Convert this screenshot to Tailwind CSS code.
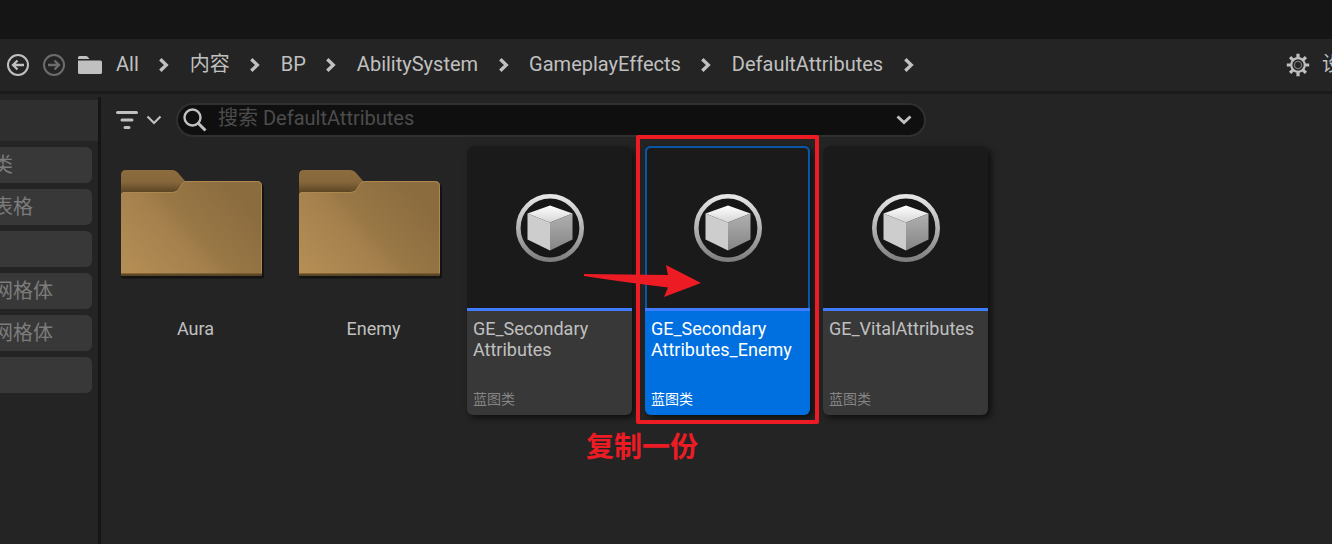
<!DOCTYPE html>
<html lang="zh-CN">
<head>
<meta charset="utf-8">
<meta name="viewport" content="width=device-width, initial-scale=1">
<title>Content Browser</title>
<script src="https://cdn.jsdelivr.net/npm/@tailwindcss/browser@4"></script>
</head>
<body class="flex min-h-screen flex-col overflow-hidden bg-[#242424] font-['Roboto','Noto_Sans_CJK_SC',sans-serif] text-xl text-[#c0c0c0]">

<svg class="absolute size-0" aria-hidden="true">
  <defs>
    <linearGradient id="face" gradientUnits="userSpaceOnUse" x1="10" y1="106" x2="110" y2="16">
      <stop offset="0" stop-color="#b48e54"/><stop offset="0.45" stop-color="#a5804d"/><stop offset="0.58" stop-color="#997846"/><stop offset="1" stop-color="#8b6c3f"/>
    </linearGradient>
    <linearGradient id="tab" gradientUnits="userSpaceOnUse" x1="0" y1="0" x2="0" y2="22">
      <stop offset="0" stop-color="#8d6d3e"/><stop offset="0.55" stop-color="#86673b"/><stop offset="1" stop-color="#5c4524"/>
    </linearGradient>
    <linearGradient id="ring" x1="0" y1="0" x2="0" y2="1">
      <stop offset="0" stop-color="#e6e6e6"/><stop offset="1" stop-color="#808080"/>
    </linearGradient>
    <linearGradient id="top" x1="0" y1="0" x2="0" y2="1">
      <stop offset="0" stop-color="#ffffff"/><stop offset="1" stop-color="#d6d6d6"/>
    </linearGradient>
    <linearGradient id="side" x1="0" y1="0" x2="0" y2="1">
      <stop offset="0" stop-color="#b0b0b0"/><stop offset="1" stop-color="#858585"/>
    </linearGradient>
    <symbol id="chevron" viewBox="0 0 10 14"><path d="M1.300 1.200 7.300 7l-6 5.800" fill="none" stroke="currentColor" stroke-width="3.300"/></symbol>
    <symbol id="folder" viewBox="0 0 146 112">
      <path d="M1.500 14h139q3.500 0 3.500 4v88q0 2.500-2.500 2.500H3.500q-2.500 0-2.500-2.500z" fill="#131313"/>
      <path d="M1 100V5q0-5 5-5h46q4 0 7 4l6 7v20H1z" fill="url(#tab)" />
      <path d="M1 104V25q0-3 3-3h49q4 0 6-3l4-6q1-2 4-2h70q5 0 5 5v88q0 2-2 2H3q-2 0-2-2z" fill="url(#face)"/>
      <path d="M1.500 26q0-3.500 3-3.500h48q4 0 6-3l4-6q1-2 4-2h70q5 0 5 5v87" fill="none" stroke="#ae894f"/>
      <path d="M1 103.500h141v.5q0 2-2 2H3q-2 0-2-2z" fill="#5a4524"/>
    </symbol>
    <symbol id="blueprint" viewBox="0 0 68 68">
      <circle cx="34" cy="34" r="31.700" fill="#171717" stroke="url(#ring)" stroke-width="4.600"/>
      <path d="M34 11.500 56.500 19.500 34 28.500 11.500 19.500z" fill="url(#top)"/>
      <path d="M11.500 19.500 34 28.500V56.500L11.500 45.500z" fill="#cdcdcd"/>
      <path d="M56.500 19.500 34 28.500V56.500L56.500 45.500z" fill="url(#side)"/>
    </symbol>
  </defs>
</svg>

<div class="h-[39px] shrink-0 bg-[#151515]"></div>

<header class="flex h-[55px] shrink-0 items-center justify-between overflow-hidden border-b-3 border-[#1a1a1a] pl-1.5">
  <nav class="flex items-center" aria-label="路径">
    <button class="mr-3" aria-label="后退">
      <svg class="size-6" viewBox="0 0 24 24" fill="none" stroke="currentColor" stroke-width="2"><circle cx="12" cy="12" r="10"/><path d="M18 12H8M11.500 7.500 7 12l4.500 4.500" stroke-width="2.300"/></svg>
    </button>
    <button class="mr-3 text-[#6c6c6c]" aria-label="前进">
      <svg class="size-6" viewBox="0 0 24 24" fill="none" stroke="currentColor" stroke-width="2"><circle cx="12" cy="12" r="10"/><path d="M6 12h10M12.500 7.500 17 12l-4.500 4.500" stroke-width="2.300"/></svg>
    </button>
    <svg class="mr-3.5 h-[18px] w-6" viewBox="0 0 24 18" fill="currentColor" aria-hidden="true"><path d="M0 3V1.500Q0 0 1.500 0H8q1 0 1.700.8L11.500 3zM0 4.500h22.500q1.500 0 1.500 1.500v10.500q0 1.500-1.500 1.500h-21Q0 18 0 16.500z"/></svg>
    <div class="flex items-center">
      <a class="pb-0.5" href="#">All</a>
      <span class="flex w-[51px] justify-center"><svg class="h-3.5 w-2.5"><use href="#chevron"/></svg></span>
      <a class="pb-0.5" href="#">内容</a>
      <span class="flex w-[51px] justify-center"><svg class="h-3.5 w-2.5"><use href="#chevron"/></svg></span>
      <a class="pb-0.5" href="#">BP</a>
      <span class="flex w-[51px] justify-center"><svg class="h-3.5 w-2.5"><use href="#chevron"/></svg></span>
      <a class="pb-0.5" href="#">AbilitySystem</a>
      <span class="flex w-[51px] justify-center"><svg class="h-3.5 w-2.5"><use href="#chevron"/></svg></span>
      <a class="pb-0.5" href="#">GameplayEffects</a>
      <span class="flex w-[51px] justify-center"><svg class="h-3.5 w-2.5"><use href="#chevron"/></svg></span>
      <a class="pb-0.5" href="#">DefaultAttributes</a>
      <span class="flex w-[51px] justify-center"><svg class="h-3.5 w-2.5"><use href="#chevron"/></svg></span>
    </div>
  </nav>
  <button class="-mr-[30px] flex shrink-0 items-center gap-3">
    <svg class="size-6" viewBox="0 0 24 24" fill="none" stroke="currentColor" aria-hidden="true">
      <circle cx="12" cy="12" r="6.800" stroke-width="2.200"/>
      <circle cx="12" cy="12" r="3.600" stroke="#777" stroke-width="1.300"/>
      <path d="M12 .8v4M12 19.200v4M.8 12h4M19.200 12h4M4.100 4.100l2.800 2.800M17.100 17.100l2.800 2.800M4.100 19.900l2.800-2.800M17.100 6.900l2.800-2.800" stroke-width="3.200"/>
    </svg>
    <span class="pb-0.5">设置</span>
  </button>
</header>

<div class="flex grow pt-[3px]">
  <aside class="w-[101px] shrink-0 overflow-hidden border-r-3 border-[#151515] pt-[3px] text-[#7c7c7c]">
    <div class="h-[41px] bg-[#2f2f2f]"></div>
    <div class="mr-1.5 -ml-[7px] mt-1.5 flex flex-col gap-1.5">
      <button class="h-9 rounded-md bg-[#383838] text-left">类</button>
      <button class="h-9 rounded-md bg-[#383838] text-left">表格</button>
      <button class="h-9 rounded-md bg-[#383838]" aria-label="筛选器"></button>
      <button class="h-9 rounded-md bg-[#383838] text-left">网格体</button>
      <button class="h-9 rounded-md bg-[#383838] text-left">网格体</button>
      <button class="h-9 rounded-md bg-[#383838]" aria-label="筛选器"></button>
    </div>
  </aside>

  <main class="min-w-0 grow pt-1.5">
    <div class="flex items-center pl-[15px]">
      <button class="mr-3.5 flex items-center gap-2" aria-label="筛选">
        <svg class="h-[18px] w-[22px]" viewBox="0 0 22 18" fill="none" stroke="currentColor" stroke-width="3" stroke-linecap="round"><path d="M1.500 1.500h19M6 9h10M9 16.500h4"/></svg>
        <svg class="h-2.5 w-4" viewBox="0 0 16 10" fill="none" stroke="currentColor" stroke-width="2.200"><path d="M1.500 1.500 8 8l6.500-6.500"/></svg>
      </button>
      <div class="flex h-[34px] max-w-[750px] grow items-center rounded-full border-2 border-[#303030] bg-[#0f0f0f] pr-3 pl-[5px]">
        <svg class="mr-[11px] size-6 shrink-0" viewBox="0 0 24 24" fill="none" stroke="currentColor" stroke-width="2.400" aria-hidden="true"><circle cx="9.500" cy="9.500" r="8"/><path d="m15 15 7.500 7.500" stroke-width="3"/></svg>
        <input class="min-w-0 grow bg-transparent pb-1 outline-none placeholder:text-[#4c4c4c]" type="text" aria-label="搜索" placeholder="搜索 DefaultAttributes">
        <button aria-label="搜索历史"><svg class="h-2.5 w-4" viewBox="0 0 16 10" fill="none" stroke="currentColor" stroke-width="3"><path d="M1.500 1.500 8 7.500l6.500-6"/></svg></button>
      </div>
    </div>

    <div class="mt-[9px] flex flex-wrap gap-[13px] pl-2.5 text-lg/[21px]">
      <div class="w-[165px] pt-6">
        <svg class="ml-[9px] h-[112px] w-[146px]"><use href="#folder"/></svg>
        <p class="mt-9 pl-1 text-center">Aura</p>
      </div>
      <div class="w-[165px] pt-6">
        <svg class="ml-[9px] h-[112px] w-[146px]"><use href="#folder"/></svg>
        <p class="mt-9 pl-1 text-center">Enemy</p>
      </div>

      <article class="flex h-[269px] w-[165px] flex-col rounded-md bg-[#383838] shadow-[3px_3px_6px_#0009]">
        <div class="flex h-[162px] items-center justify-center rounded-t-md bg-[#1a1a1a] pt-0.5"><svg class="size-[68px]"><use href="#blueprint"/></svg></div>
        <div class="flex grow flex-col justify-between border-t-3 border-[#407cff] px-1.5 pt-[7px] pb-1.5">
          <h3>GE_Secondary<br>Attributes</h3>
          <p class="text-sm/5 text-[#858585]">蓝图类</p>
        </div>
      </article>

      <article class="relative flex h-[269px] w-[165px] flex-col rounded-md bg-[#0070e0] text-white shadow-[3px_3px_6px_#0009]">
        <div class="flex h-[162px] items-center justify-center rounded-t-md border-2 border-b-0 border-[#0956a5] bg-[#1a1a1a]"><svg class="size-[68px]"><use href="#blueprint"/></svg></div>
        <div class="flex grow flex-col justify-between border-t-3 border-[#407cff] px-1.5 pt-[7px] pb-1.5">
          <h3>GE_Secondary<br>Attributes_Enemy</h3>
          <p class="text-sm/5">蓝图类</p>
        </div>
        <div class="absolute -top-[11px] -right-[9px] -bottom-[9px] -left-[9px] z-10 rounded-xs border-4 border-[#ed1c24]"></div>
        <svg class="absolute top-[118px] -left-[62px] z-10 h-[34px] w-[119px]" viewBox="0 0 119 34" fill="#ed1c24" aria-hidden="true"><path d="M1 10 85 11 83 1 118 19 81 33 85 23.500Q40 18 1 12z"/></svg>
        <p class="absolute top-[282px] -left-[59px] z-10 text-[28px]/[40px] font-bold whitespace-nowrap text-[#ed1c24]">复制一份</p>
      </article>

      <article class="flex h-[269px] w-[165px] flex-col rounded-md bg-[#383838] shadow-[3px_3px_6px_#0009]">
        <div class="flex h-[162px] items-center justify-center rounded-t-md bg-[#1a1a1a] pt-0.5"><svg class="size-[68px]"><use href="#blueprint"/></svg></div>
        <div class="flex grow flex-col justify-between border-t-3 border-[#407cff] px-1.5 pt-[7px] pb-1.5">
          <h3>GE_VitalAttributes</h3>
          <p class="text-sm/5 text-[#858585]">蓝图类</p>
        </div>
      </article>
    </div>
  </main>
</div>
</body>
</html>
